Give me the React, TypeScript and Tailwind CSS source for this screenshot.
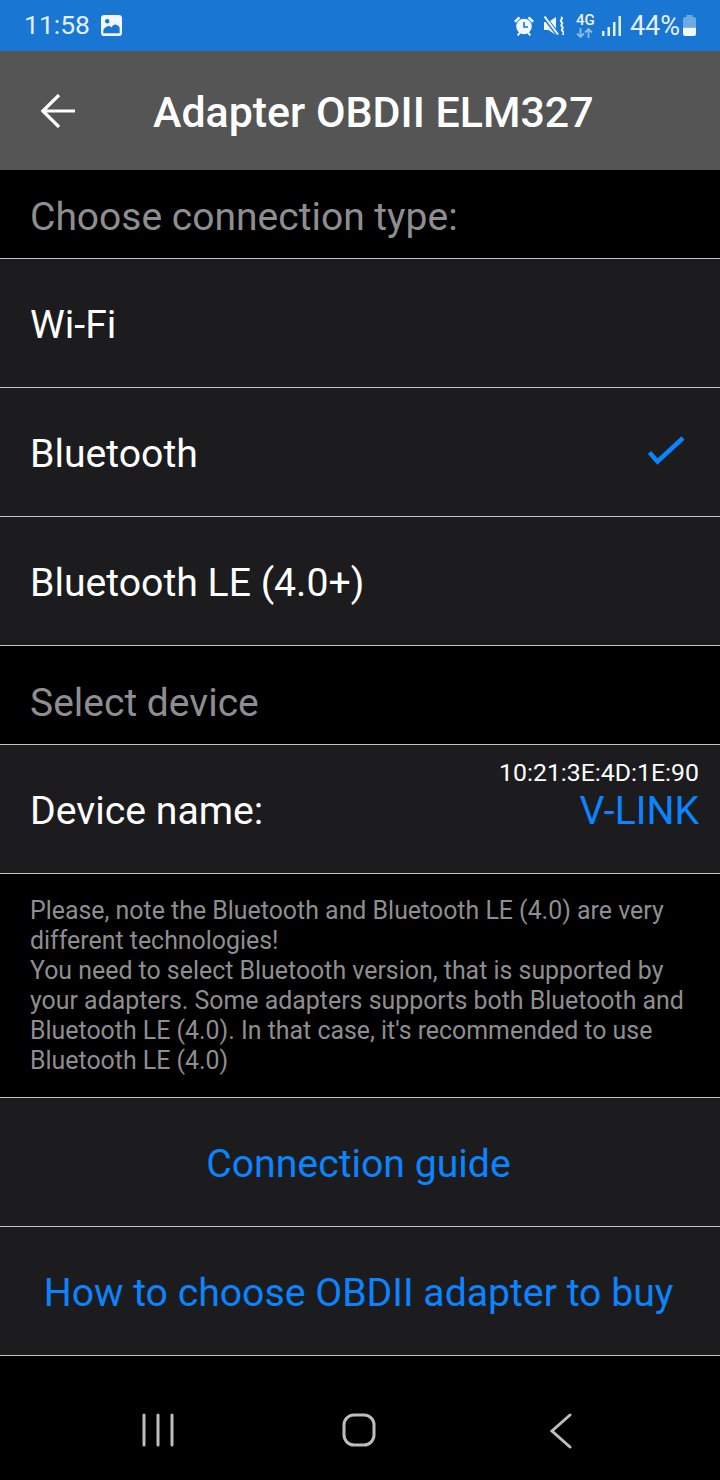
const FONT = "font-['Roboto',sans-serif]";

function Row({ children, className = '' }: { children: React.ReactNode; className?: string }) {
  return (
    <div className={`h-[129px] shrink-0 bg-[#1c1c1e] border-b border-[#c4c4c6] flex items-center pl-[30px] ${className}`}>
      {children}
    </div>
  );
}

function Label({ children, className = 'text-white' }: { children: React.ReactNode; className?: string }) {
  return <span className={`text-[39.200px] leading-none pt-[6px] ${className}`}>{children}</span>;
}

function StatusIcons() {
  return (
    <div className="flex items-center">
      {/* alarm */}
      <svg width="20" height="20" viewBox="0 0 20 20" className="mr-[10px]" fill="#f1f7fd">
        <circle cx="10" cy="10.500" r="7.800" />
        <path d="M0 5 4.500 0.500 6.400 2.200 1.800 6.800ZM20 5 15.500 0.500 13.600 2.200 18.200 6.800Z" />
        <path d="M3.800 19.500 5.800 16.500M16.200 19.500 14.200 16.500" stroke="#f1f7fd" strokeWidth="2" />
        <path d="M10 6v5h4" fill="none" stroke="#1976d2" strokeWidth="1.600" />
      </svg>
      {/* vibrate mute */}
      <svg width="20" height="20" viewBox="0 0 20 20" className="mr-[12px]" fill="#f1f7fd">
        <path d="M0 6h4.500L12 1v18l-7.500-5H0Z" />
        <path d="M0 0.500 13.500 18" stroke="#1976d2" strokeWidth="4.200" />
        <path d="M0.500 0.500 14 18.500" stroke="#f1f7fd" strokeWidth="2" />
        <path d="M17 1c3 2-2 3 .5 5s-2 2.500 .5 4.500-2 2.500 .5 4.500 .5 3 .5 4" fill="none" stroke="#f1f7fd" strokeWidth="2" />
      </svg>
      {/* 4G with arrows */}
      <div className="relative w-[17px] h-[23px] mr-[9px]">
        <span className="absolute left-0 top-[-2px] text-[15px] leading-[16px] font-medium text-[#f1f7fd]">4G</span>
        <svg width="17" height="10" viewBox="0 0 17 10" className="absolute left-0 top-[14px]" fill="none" stroke="#8dbce9" strokeWidth="1.800">
          <path d="M4.500 0v9M1 5.500 4.500 9 8 5.500M12.500 10V1M9 4.500 12.500 1 16 4.500" />
        </svg>
      </div>
      {/* signal */}
      <svg width="19" height="20" viewBox="0 0 19 20" className="mr-[9px]" fill="#e3f0fb">
        <rect x="0" y="15" width="2.500" height="5" />
        <rect x="5.500" y="11" width="2.500" height="9" />
        <rect x="11" y="6" width="2.500" height="14" />
        <rect x="16.500" y="0" width="2.500" height="20" />
      </svg>
      <span className="text-[27px] leading-none pt-[2px] text-[#e3f0fb]">44%</span>
      {/* battery */}
      <svg width="13" height="21" viewBox="0 0 13 21" className="ml-[3px]">
        <path d="M3.500 0h6v2h1.500a2 2 0 0 1 2 2v8H0V4a2 2 0 0 1 2-2h1.500Z" fill="#6fa9e4" />
        <path d="M0 12.500h13V19a2 2 0 0 1-2 2H2a2 2 0 0 1-2-2Z" fill="#f1f7fd" />
      </svg>
    </div>
  );
}

export default function App() {
  return (
    <div className={`w-[720px] h-[1480px] bg-black flex flex-col overflow-hidden ${FONT}`}>
      {/* status bar */}
      <div className="h-[51px] shrink-0 bg-[#1976d2] flex items-center justify-between pl-[24px] pr-[24px] text-[#e3f0fb]">
        <div className="flex items-center gap-[11px]">
          <span className="text-[26.500px] leading-none">11:58</span>
          <svg width="21" height="21" viewBox="0 0 22 22">
            <rect width="22" height="22" rx="3.500" fill="#f1f7fd" />
            <circle cx="6.500" cy="6.500" r="2.300" fill="#1976d2" />
            <path d="M2.500 19v-3.500c3-4 6-5 8.500-2.500 2-3.500 5-4.500 8.500 0V19Z" fill="#1976d2" />
          </svg>
        </div>
        <StatusIcons />
      </div>

      {/* toolbar */}
      <div className="h-[119px] shrink-0 bg-[#555555] flex items-center pl-[41px]">
        <svg width="34" height="34" viewBox="0 0 34 34" fill="none" stroke="#ffffff" strokeWidth="3.200">
          <path d="M34 17H1.500M18 1 1.800 17 18 33" />
        </svg>
        <h1 className="ml-[78px] pt-[4px] text-[42.900px] leading-none font-medium text-white">Adapter OBDII ELM327</h1>
      </div>

      {/* connection type */}
      <div className="h-[89px] shrink-0 border-b border-[#c4c4c6] flex items-center px-[30px] pt-[7px]">
        <span className="text-[39px] leading-none text-[#8e8e90]">Choose connection type:</span>
      </div>
      <Row><Label>Wi-Fi</Label></Row>
      <Row className="justify-between pr-[30px]">
        <Label>Bluetooth</Label>
        <svg width="38" height="30" viewBox="0 0 38 30" fill="none" stroke="#0a84ff" strokeWidth="4.500" className="mr-[5px] mb-[2px]">
          <path d="M2.500 16.500 10.500 25.500 36 2" />
        </svg>
      </Row>
      <Row><Label>Bluetooth LE (4.0+)</Label></Row>

      {/* select device */}
      <div className="h-[99px] shrink-0 border-b border-[#c4c4c6] flex items-center px-[30px] pt-[16px]">
        <span className="text-[39px] leading-none text-[#8e8e90]">Select device</span>
      </div>
      <Row className="justify-between pr-[21px]">
        <Label>Device name:</Label>
        <div className="flex flex-col items-end gap-[3px] pb-[29px]">
          <span className="text-[24.800px] leading-[30px] text-white">10:21:3E:4D:1E:90</span>
          <span className="text-[39.200px] leading-[40px] text-[#0a84ff]">V-LINK</span>
        </div>
      </Row>

      {/* note */}
      <div className="h-[224px] shrink-0 border-b border-[#c4c4c6] px-[30px] pt-[22px] text-[24.900px] leading-[30px] text-[#8e8e90]">
        <p>Please, note the Bluetooth and Bluetooth LE (4.0) are very different technologies!</p>
        <p>You need to select Bluetooth version, that is supported by your adapters. Some adapters supports both Bluetooth and Bluetooth LE (4.0). In that case, it's recommended to use Bluetooth LE (4.0)</p>
      </div>

      <Row className="justify-center pr-[33px]"><Label className="text-[#0a84ff]">Connection guide</Label></Row>
      <Row className="justify-center pr-[33px]"><Label className="text-[#0a84ff]">How to choose OBDII adapter to buy</Label></Row>

      {/* nav bar */}
      <div className="flex-1 flex items-start pl-[141px] pt-[57px]">
        <svg width="34" height="34" viewBox="0 0 34 34" stroke="#bdbdbd" strokeWidth="3" strokeLinecap="round">
          <path d="M3 2v30M17 2v30M31 2v30" />
        </svg>
        <svg width="34" height="34" viewBox="0 0 34 34" fill="none" stroke="#bdbdbd" strokeWidth="3" className="ml-[167px]">
          <rect x="2" y="2" width="30" height="30" rx="10" />
        </svg>
        <svg width="22" height="36" viewBox="0 0 22 36" fill="none" stroke="#bdbdbd" strokeWidth="3" strokeLinecap="round" className="ml-[174px]">
          <path d="M20 2 2 18 20 34" />
        </svg>
      </div>
    </div>
  );
}
